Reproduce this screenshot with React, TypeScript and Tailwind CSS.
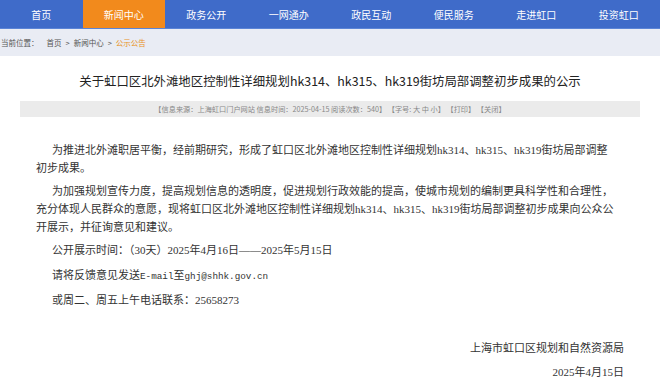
import React from "react";

const navItems = ["首页", "新闻中心", "政务公开", "一网通办", "政民互动", "便民服务", "走进虹口", "投资虹口"];

const sans = { fontFamily: '"Noto Sans CJK SC", "Noto Sans", sans-serif' };

export default function App() {
  return (
    <div className="w-[660px] h-[389px] overflow-hidden bg-white font-['Noto_Sans_CJK_SC',sans-serif]">
      <nav className="grid grid-cols-8 h-[28px] bg-[#3f6bc9]">
        {navItems.map((n, i) => (
          <div
            key={n}
            className={`flex items-center justify-center text-[10px] text-white ${i === 1 ? "bg-[#f28a1c]" : ""}`}
          >
            {n}
          </div>
        ))}
      </nav>
      <div className="h-[28px] bg-[#e9ecf4] flex items-center text-[7.5px] text-[#555] pl-[1px] border-t border-[#5b84d6]">
        <span>当前位置：</span>
        <span className="ml-[8px]">首页</span>
        <span className="mx-[4px]">&gt;</span>
        <span>新闻中心</span>
        <span className="mx-[4px]">&gt;</span>
        <span className="text-[#e8921e]">公示公告</span>
      </div>
      <div className="px-[20px]">
        <h1 className="pt-[15px] text-center text-[12.4px] leading-[20px] text-[#222] whitespace-nowrap" style={sans}>
          关于虹口区北外滩地区控制性详细规划hk314、hk315、hk319街坊局部调整初步成果的公示
        </h1>
        <div className="mt-[10px] h-[16px] bg-[#ebebeb] flex items-center justify-center text-[7.2px] text-[#888] whitespace-nowrap">
          【信息来源：上海虹口门户网站&nbsp;信息时间：2025-04-15&nbsp;阅读次数：540】&nbsp;【字号: 大 中 小】&nbsp;【打印】&nbsp;【关闭】
        </div>
        <div className="px-[16px] pt-[24px] text-[11px] leading-[18px] text-[#333] whitespace-nowrap font-['Liberation_Serif','Noto_Sans_CJK_SC',serif]">
          <p className="indent-[16px]">
            为推进北外滩职居平衡，经前期研究，形成了虹口区北外滩地区控制性详细规划hk314、hk315、hk319街坊局部调整
            <br />
            初步成果。
          </p>
          <p className="indent-[16px] mt-[5px]">
            为加强规划宣传力度，提高规划信息的透明度，促进规划行政效能的提高，使城市规划的编制更具科学性和合理性，
            <br />
            充分体现人民群众的意愿，现将虹口区北外滩地区控制性详细规划hk314、hk315、hk319街坊局部调整初步成果向公众公
            <br />
            开展示，并征询意见和建议。
          </p>
          <p className="indent-[16px] mt-[5px]">公开展示时间：（30天）2025年4月16日——2025年5月15日</p>
          <p className="indent-[16px] mt-[7px]">
            请将反馈意见发送<span className="font-['Liberation_Mono',monospace] text-[9.3px]">E-mail</span>至
            <span className="font-['Liberation_Mono',monospace] text-[9.3px]">ghj@shhk.gov.cn</span>
          </p>
          <p className="indent-[16px] mt-[5px]">或周二、周五上午电话联系：25658273</p>
          <p className="text-right mt-[30px]">上海市虹口区规划和自然资源局</p>
          <p className="text-right mt-[6px]">2025年4月15日</p>
        </div>
      </div>
    </div>
  );
}
